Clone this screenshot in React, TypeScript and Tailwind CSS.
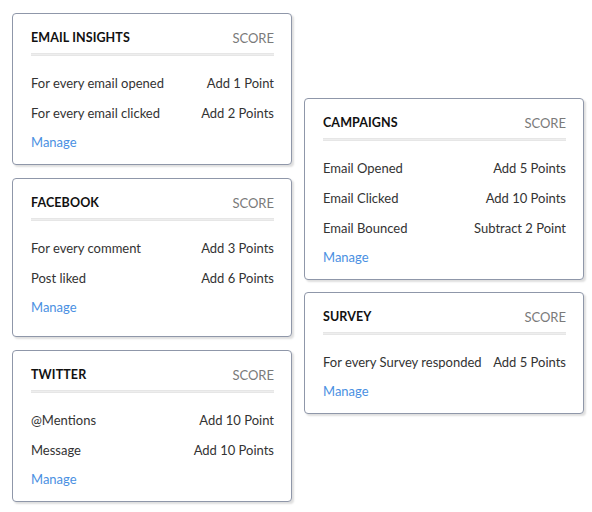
import React from "react";

type Row = { label: string; value: string };

type Card = {
  title: string;
  rows: Row[];
  tall?: boolean;
};

const left: Card[] = [
  {
    title: "Email Insights",
    rows: [
      { label: "For every email opened", value: "Add 1 Point" },
      { label: "For every email clicked", value: "Add 2 Points" },
    ],
  },
  {
    title: "Facebook",
    tall: true,
    rows: [
      { label: "For every comment", value: "Add 3 Points" },
      { label: "Post liked", value: "Add 6 Points" },
    ],
  },
  {
    title: "Twitter",
    rows: [
      { label: "@Mentions", value: "Add 10 Point" },
      { label: "Message", value: "Add 10 Points" },
    ],
  },
];

const right: Card[] = [
  {
    title: "Campaigns",
    rows: [
      { label: "Email Opened", value: "Add 5 Points" },
      { label: "Email Clicked", value: "Add 10 Points" },
      { label: "Email Bounced", value: "Subtract 2 Point" },
    ],
  },
  {
    title: "Survey",
    rows: [{ label: "For every Survey responded", value: "Add 5 Points" }],
  },
];

function ScoreCard({ card }: { card: Card }) {
  return (
    <div
      className={`w-[280px] rounded-[4px] border border-[#8f97a9] bg-white pl-[18px] pr-[17px] pt-[15px] shadow-[2px_2px_2px_rgba(0,0,0,0.13)] ${
        card.tall ? "pb-[19px]" : "pb-[12px]"
      }`}
    >
      <div className="flex items-center justify-between leading-[18px]">
        <span className="text-[12.5px] font-bold uppercase tracking-[0.1px] text-[#111]">
          {card.title}
        </span>
        <span className="text-[13px] text-[#7a7a7a]">SCORE</span>
      </div>
      <div className="mt-[6px] h-[3px] border-y border-[#e6e6e6] bg-[#eeeeee]" />
      <div className="mt-[17px] flex flex-col gap-[10px]">
        {card.rows.map((r) => (
          <div
            key={r.label}
            className="flex items-center justify-between text-[13px] leading-[20px] text-[#333]"
          >
            <span>{r.label}</span>
            <span>{r.value}</span>
          </div>
        ))}
      </div>
      <a
        href="#"
        className="mt-[9px] block text-[13px] leading-[20px] text-[#4a90e2]"
      >
        Manage
      </a>
    </div>
  );
}

export default function App() {
  return (
    <div
      className="flex h-[512px] w-[592px] gap-3 bg-white px-3"
      style={{ fontFamily: "Lato, 'Open Sans', sans-serif" }}
    >
      <div className="flex flex-col gap-[13px] pt-[13px]">
        {left.map((c) => (
          <ScoreCard key={c.title} card={c} />
        ))}
      </div>
      <div className="flex flex-col gap-3 pt-[98px]">
        {right.map((c) => (
          <ScoreCard key={c.title} card={c} />
        ))}
      </div>
    </div>
  );
}
